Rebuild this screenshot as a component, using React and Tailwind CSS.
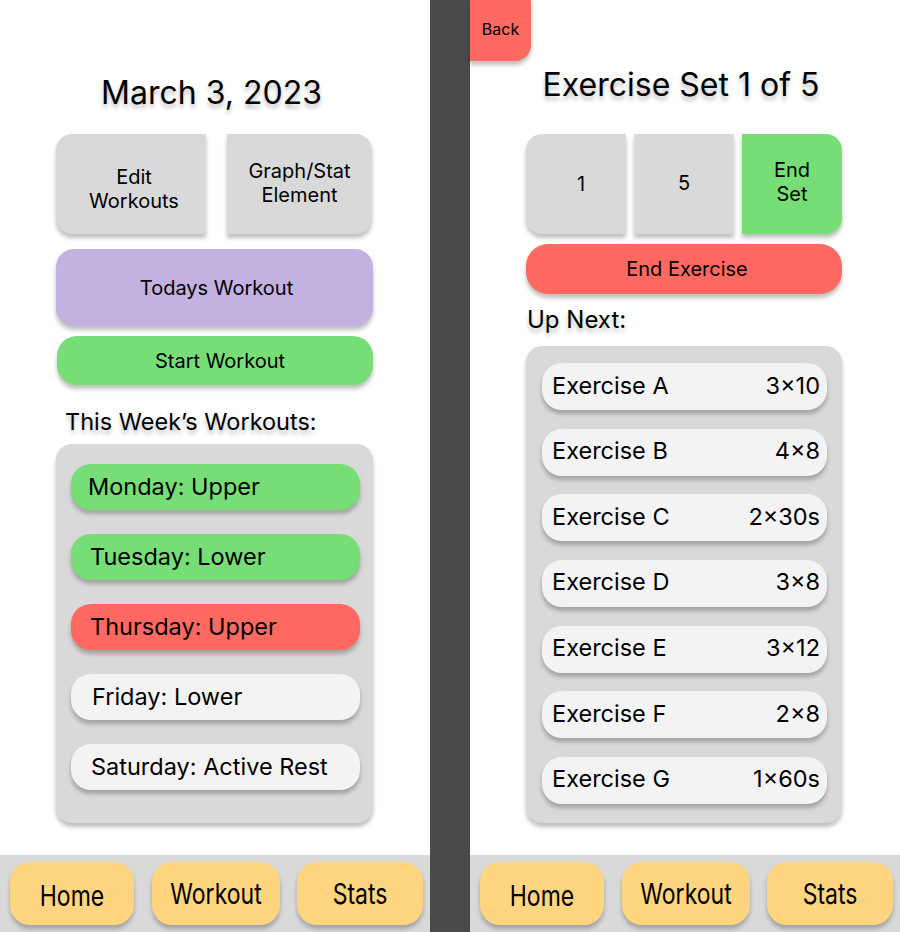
const font = { fontFamily: 'Inter, "Liberation Sans", sans-serif' }

const shadow = 'shadow-[0_4px_4px_rgba(0,0,0,0.25)]'
const tshadow = '[text-shadow:0_4px_4px_rgba(0,0,0,0.25)]'

function NavBar() {
  return (
    <div className="mt-auto h-[77px] bg-[#d9d9d9] flex pl-[10px] pt-[7px]">
      <div className={`w-[124px] h-[63px] rounded-[20px] bg-[#ffd580] ${shadow} flex items-center justify-center`}>
        <span className="text-[23px] leading-[28px] scale-y-125 translate-y-[2px]">Home</span>
      </div>
      <div className={`ml-[18px] w-[128px] h-[63px] rounded-[20px] bg-[#ffd580] ${shadow} flex items-center justify-center`}>
        <span className="text-[23px] leading-[28px] scale-y-125">Workout</span>
      </div>
      <div className={`ml-[17px] w-[126px] h-[63px] rounded-[20px] bg-[#ffd580] ${shadow} flex items-center justify-center`}>
        <span className="text-[23px] leading-[28px] scale-y-125">Stats</span>
      </div>
    </div>
  )
}

function HomeScreen() {
  const days = [
    { label: 'Monday: Upper', bg: 'bg-[#77dd77]', pl: 'pl-[17px]' },
    { label: 'Tuesday: Lower', bg: 'bg-[#77dd77]', pl: 'pl-[19px]' },
    { label: 'Thursday: Upper', bg: 'bg-[#ff6961]', pl: 'pl-[19px]' },
    { label: 'Friday: Lower', bg: 'bg-[#f3f3f3]', pl: 'pl-[21px]' },
    { label: 'Saturday: Active Rest', bg: 'bg-[#f3f3f3]', pl: 'pl-[20px]' },
  ]
  return (
    <div className="w-[430px] h-full bg-white flex flex-col">
      <div className="pl-[56px] pr-[57px] flex flex-col">
        <h1 className={`mt-[73px] pr-[6px] text-center text-[32px] leading-[40px] ${tshadow}`}>
          March 3, 2023
        </h1>

        <div className="mt-[21px] flex gap-[21px]">
          <div className={`w-[150px] h-[100px] rounded-l-[16px] bg-[#d9d9d9] ${shadow} flex items-center justify-center text-center text-[20px] leading-[24px] pt-[10px] pl-[6px]`}>
            Edit
            <br />
            Workouts
          </div>
          <div className={`w-[145px] h-[100px] rounded-r-[16px] bg-[#d9d9d9] ${shadow} flex items-center justify-center text-center text-[20px] leading-[24px] pb-[2px]`}>
            Graph/Stat
            <br />
            Element
          </div>
        </div>

        <div className={`mt-[15px] h-[77px] rounded-[18px] bg-[#c3b1e1] ${shadow} flex items-center justify-center text-[20px] pl-[4px]`}>
          Todays Workout
        </div>

        <div className={`mt-[10px] ml-[1px] h-[49px] rounded-[20px] bg-[#77dd77] ${shadow} flex items-center justify-center text-[20px] pl-[10px]`}>
          Start Workout
        </div>

        <p className={`mt-[22px] ml-[9px] text-[23.5px] leading-[30px] ${tshadow}`}>This Week’s Workouts:</p>

        <div className={`mt-[7px] rounded-[16px] bg-[#d9d9d9] ${shadow} pt-[20px] pb-[33px] pl-[15px] pr-[13px] flex flex-col gap-[24px]`}>
          {days.map((d) => (
            <div
              key={d.label}
              className={`h-[46px] rounded-[20px] ${d.bg} ${shadow} flex items-center ${d.pl} text-[23.5px] leading-[30px]`}
            >
              {d.label}
            </div>
          ))}
        </div>
      </div>
      <NavBar />
    </div>
  )
}

function ExerciseScreen() {
  const exercises = [
    ['Exercise A', '3×10'],
    ['Exercise B', '4×8'],
    ['Exercise C', '2×30s'],
    ['Exercise D', '3×8'],
    ['Exercise E', '3×12'],
    ['Exercise F', '2×8'],
    ['Exercise G', '1×60s'],
  ]
  return (
    <div className="w-[430px] h-full bg-white flex flex-col">
      <div className={`w-[61px] h-[61px] rounded-br-[16px] bg-[#ff6961] ${shadow} flex items-center justify-center text-[16px] pb-[3px]`}>
        Back
      </div>
      <div className="pl-[56px] pr-[58px] flex flex-col">
        <h1 className={`mt-[4px] pr-[6px] text-center text-[32px] leading-[40px] ${tshadow}`}>Exercise Set 1 of 5</h1>

        <div className="mt-[29px] flex gap-[8px]">
          <div className={`w-[100px] h-[100px] rounded-l-[16px] bg-[#d9d9d9] ${shadow} flex items-center justify-center text-[20px] pl-[10px]`}>
            1
          </div>
          <div className={`w-[100px] h-[100px] bg-[#d9d9d9] ${shadow} flex items-center justify-center text-[20px] pb-[2px]`}>
            5
          </div>
          <div className={`w-[100px] h-[100px] rounded-r-[16px] bg-[#77dd77] ${shadow} flex items-center justify-center text-center text-[20px] leading-[24px] pb-[4px]`}>
            End
            <br />
            Set
          </div>
        </div>

        <div className={`mt-[10px] h-[50px] rounded-[22px] bg-[#ff6961] ${shadow} flex items-center justify-center text-[20px] pl-[6px]`}>
          End Exercise
        </div>

        <p className={`mt-[11px] ml-[1px] text-[24px] leading-[30px] ${tshadow}`}>Up Next:</p>

        <div className={`mt-[11px] rounded-[16px] bg-[#d9d9d9] ${shadow} pt-[17px] pb-[19px] pl-[16px] pr-[15px] flex flex-col gap-[18.67px]`}>
          {exercises.map(([name, reps]) => (
            <div
              key={name}
              className={`h-[47px] rounded-[20px] bg-[#f3f3f3] ${shadow} flex items-center justify-between pl-[10px] pr-[7px] pb-[2px] text-[23.5px] leading-[30px]`}
            >
              <span>{name}</span>
              <span>{reps}</span>
            </div>
          ))}
        </div>
      </div>
      <NavBar />
    </div>
  )
}

export default function App() {
  return (
    <div className="w-[900px] h-[932px] flex overflow-hidden text-black" style={font}>
      <HomeScreen />
      <div className="w-[40px] h-full bg-[#4a4a4a]" />
      <ExerciseScreen />
    </div>
  )
}
